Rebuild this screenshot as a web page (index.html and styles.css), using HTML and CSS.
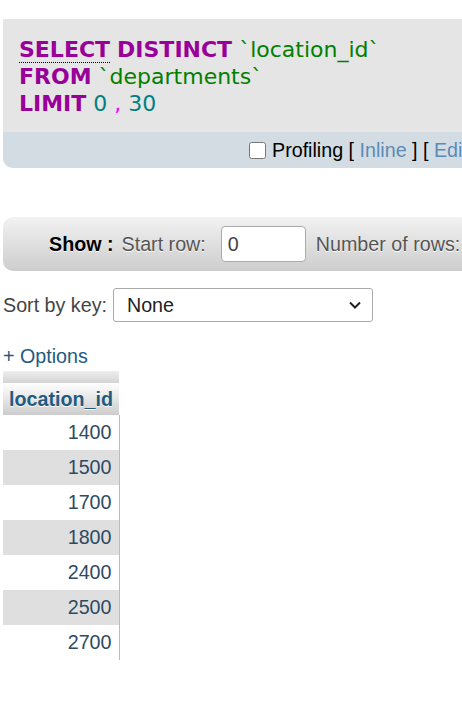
FILE: index.html
```html
<!DOCTYPE html>
<html>
<head>
<meta charset="utf-8">
<link rel="stylesheet" href="styles.css">
</head>
<body>
<div class="sql-box">
  <div class="sql-code">
    <div class="line"><span class="kw kw-link">SELECT</span> <span class="kw">DISTINCT</span> <span class="ident">`location_id`</span></div>
    <div class="line"><span class="kw">FROM</span> <span class="ident">`departments`</span></div>
    <div class="line"><span class="kw">LIMIT</span> <span class="num">0</span> <span class="punct">,</span> <span class="num">30</span></div>
  </div>
  <div class="sql-tools">
    <input type="checkbox" class="chk">
    <span>Profiling [ <a class="lnk">Inline</a> ] [ <a class="lnk">Edit</a> ] [ <a class="lnk">Explain SQL</a> ] [ <a class="lnk">Create PHP code</a> ]</span>
  </div>
</div>

<div class="nav-bar">
  <span class="show">Show :</span>
  <span class="lbl">Start row:</span>
  <input class="num-input" type="text" value="0">
  <span class="lbl">Number of rows:</span>
  <input class="num-input" type="text" value="25">
</div>

<div class="sort-row">
  <span>Sort by key:</span>
  <div class="select">
    <span>None</span>
    <svg class="chev" width="14" height="10" viewBox="0 0 14 10"><path d="M2 2.5 L7 7.5 L12 2.5" fill="none" stroke="#222" stroke-width="2"/></svg>
  </div>
</div>

<div class="options">+ Options</div>

<table class="data">
  <thead>
    <tr class="strip"><th></th></tr>
    <tr class="head"><th>location_id</th></tr>
  </thead>
  <tbody>
    <tr><td>1400</td></tr>
    <tr class="odd"><td>1500</td></tr>
    <tr><td>1700</td></tr>
    <tr class="odd"><td>1800</td></tr>
    <tr><td>2400</td></tr>
    <tr class="odd"><td>2500</td></tr>
    <tr><td>2700</td></tr>
  </tbody>
</table>
</body>
</html>
```

FILE: styles.css
```css
html, body {
  margin: 0;
  padding: 0;
  overflow: hidden;
  background: #fff;
}
body {
  width: 462px;
  height: 712px;
  font-family: "Liberation Sans", Arial, sans-serif;
  font-size: 19.7px;
  color: #444;
  padding-left: 3px;
  box-sizing: border-box;
}
.sql-box {
  margin-top: 19px;
  width: 800px;
  background: #e5e5e5;
  border-radius: 0 0 0 10px;
  overflow: hidden;
}
.sql-code {
  padding: 17px 16px 15px;
  font-family: "DejaVu Sans", Verdana, sans-serif;
  font-size: 22px;
  line-height: 27px;
  white-space: nowrap;
}
.kw {
  font-weight: bold;
  color: #990099;
}
.kw-link {
  border-bottom: 1px dotted #000;
}
.ident {
  color: #008000;
}
.num {
  color: #008080;
}
.punct {
  color: #ff00ff;
}
.sql-tools {
  background: #d3dce3;
  height: 36px;
  display: flex;
  align-items: center;
  padding-left: 246px;
  color: #000;
  white-space: nowrap;
}
.chk {
  width: 17px;
  height: 17px;
  margin: 0 6px 0 0;
}
.lnk {
  color: #5b8bb6;
}
.nav-bar {
  margin-top: 49px;
  width: 800px;
  height: 54px;
  box-sizing: border-box;
  background: linear-gradient(#f2f2f2, #cdcdcd);
  border-radius: 10px 0 0 10px;
  display: flex;
  align-items: center;
  padding-left: 46px;
  white-space: nowrap;
  color: #555;
  text-shadow: 0 1px 0 #fff;
}
.show {
  font-weight: bold;
  color: #000;
  margin-right: 8px;
}
.lbl {
  margin-right: 15px;
}
.num-input {
  width: 85px;
  height: 36px;
  box-sizing: border-box;
  border: 1px solid #aaa;
  border-radius: 4px;
  background: #fff;
  font-family: "Liberation Sans", Arial, sans-serif;
  font-size: 19.7px;
  color: #444;
  padding: 0 6px;
  margin-right: 10px;
  text-shadow: none;
}
.sort-row {
  margin-top: 17px;
  display: flex;
  align-items: center;
  gap: 6px;
  color: #444;
}
.select {
  width: 260px;
  height: 34px;
  box-sizing: border-box;
  border: 1px solid #aaa;
  border-radius: 3px;
  background: #fff;
  display: flex;
  align-items: center;
  justify-content: space-between;
  padding: 0 10px 0 13px;
  color: #222;
}
.options {
  margin-top: 22px;
  color: #235a81;
  line-height: 24px;
}
.data {
  margin-top: 3px;
  border-collapse: collapse;
  border-spacing: 0;
}
.data th {
  padding: 0;
}
.strip th {
  height: 12px;
  background: linear-gradient(#eeeeee, #d4d4d4);
}
.head th {
  height: 32px;
  width: 116px;
  background: linear-gradient(#ffffff, #cccccc);
  color: #235a81;
  font-weight: bold;
  text-shadow: 0 1px 0 #fff;
  text-align: center;
  padding: 0;
}
.data td {
  height: 35px;
  padding: 0 7px 0 0;
  text-align: right;
  color: #2e4a62;
  border-right: 1px solid #bbb;
}
.data tr.odd td {
  background: #dfdfdf;
}
```
